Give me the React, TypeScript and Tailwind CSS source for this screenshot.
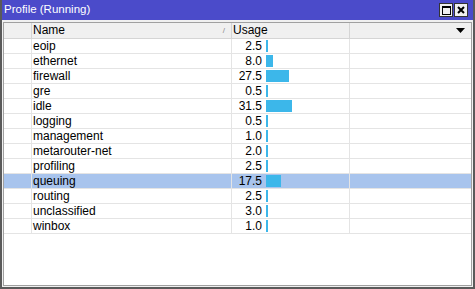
import React from "react";

type Row = { name: string; usage: number };

const ROWS: Row[] = [
  { name: "eoip", usage: 2.5 },
  { name: "ethernet", usage: 8.0 },
  { name: "firewall", usage: 27.5 },
  { name: "gre", usage: 0.5 },
  { name: "idle", usage: 31.5 },
  { name: "logging", usage: 0.5 },
  { name: "management", usage: 1.0 },
  { name: "metarouter-net", usage: 2.0 },
  { name: "profiling", usage: 2.5 },
  { name: "queuing", usage: 17.5 },
  { name: "routing", usage: 2.5 },
  { name: "unclassified", usage: 3.0 },
  { name: "winbox", usage: 1.0 },
];

const SELECTED = "queuing";

function ProfileRow({ row }: { row: Row }) {
  const sel = row.name === SELECTED;
  const barW = Math.max(2, Math.round(row.usage * 0.83));
  return (
    <div
      className={`flex h-[15px] border-b border-[#e4e4e4] text-[12px] leading-[14px] ${sel ? "bg-[#a8c4ed]" : "bg-white"}`}
    >
      <div className="w-[28px] shrink-0 border-r border-[#e4e4e4]" />
      <div className="w-[200px] shrink-0 truncate border-r border-[#e4e4e4] pl-[1px]">{row.name}</div>
      <div className="flex w-[118px] shrink-0 items-center border-r border-[#e4e4e4]">
        <span className="w-[32px] shrink-0 pr-[2px] text-right">{row.usage.toFixed(1)}</span>
        <span className="ml-[2px] h-[12px] bg-[#3cb7ea]" style={{ width: barW }} />
      </div>
      <div className="flex-1" />
    </div>
  );
}

export default function App() {
  return (
    <div
      className="flex h-[289px] w-[475px] flex-col border-x-2 border-b-2 border-[#5a5a5a] bg-[#f0f0f0] text-black"
      style={{ fontFamily: '"Liberation Sans", Arial, sans-serif' }}
    >
      <div className="flex h-[20px] shrink-0 items-center justify-between bg-[#4b4bca] pl-[2px] pr-[5px]">
        <span className="text-[11.5px] text-white">Profile (Running)</span>
        <div className="flex gap-[1px]">
          <span className="flex h-[14px] w-[14px] items-center justify-center border border-[#333] bg-[#f0f0f0]">
            <span className="h-[9px] w-[9px] border border-black border-t-2" />
          </span>
          <span className="flex h-[14px] w-[14px] items-center justify-center border border-[#333] bg-[#f0f0f0]">
            <svg width="8" height="8" viewBox="0 0 8 8">
              <path d="M1 1 L7 7 M7 1 L1 7" stroke="black" strokeWidth="2" />
            </svg>
          </span>
        </div>
      </div>
      <div className="flex flex-1 flex-col px-[1px] pb-[1px] pt-[2px]">
        <div className="flex flex-1 flex-col border border-[#a0a0a0] bg-white">
          <div className="flex h-[16px] shrink-0 border-b border-[#d5d5d5] bg-[#f0f0f0] text-[12px] leading-[15px]">
            <div className="w-[28px] shrink-0 border-r border-[#d5d5d5]" />
            <div className="flex w-[200px] shrink-0 items-center justify-between border-r border-[#d5d5d5] pl-[1px] pr-[6px]">
              <span>Name</span>
              <span className="text-[8px] text-[#888]">/</span>
            </div>
            <div className="w-[118px] shrink-0 border-r border-[#d5d5d5] pl-[1px]">Usage</div>
            <div className="flex flex-1 items-center justify-end pr-[6px]">
              <svg width="9" height="5" viewBox="0 0 9 5">
                <path d="M0 0 L9 0 L4.5 5 Z" fill="black" />
              </svg>
            </div>
          </div>
          {ROWS.map((r) => (
            <ProfileRow key={r.name} row={r} />
          ))}
        </div>
      </div>
    </div>
  );
}
